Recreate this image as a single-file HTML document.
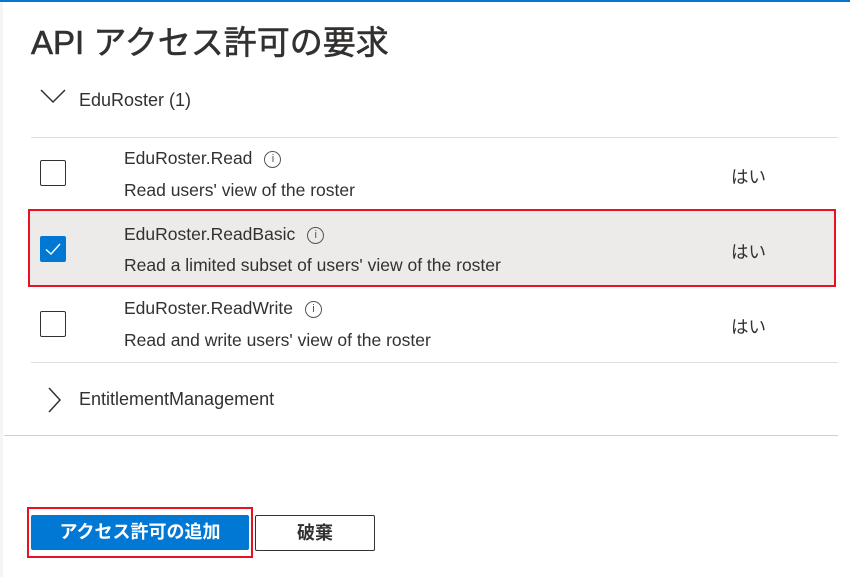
<!DOCTYPE html>
<html><head><meta charset="utf-8"><style>
body{margin:0;width:850px;height:577px;background:#fff;position:relative;overflow:hidden;font-family:"Liberation Sans","Noto Sans CJK JP",sans-serif;color:#323130}
.a{position:absolute;white-space:nowrap}
.cb{position:absolute;left:40px;width:24px;height:24px;border:1px solid #323130;border-radius:2px;background:#fff}
.t{font-size:17.5px;color:#323130}
.info{display:inline-block;width:15px;height:15px;border:1px solid #555;border-radius:50%;font-size:11px;text-align:center;line-height:15px;margin-left:12px;vertical-align:2px;color:#555}
.sep{position:absolute;height:1px;background:#e1dfdd}
</style></head><body>
<div class="a" style="left:0;top:0;width:850px;height:2px;background:#0078d4"></div>
<div class="a" style="left:0;top:2px;width:3px;height:575px;background:#f6f5f4"></div>
<div class="a" style="left:31px;top:16px;font-size:33px;font-weight:normal;color:#323130;-webkit-text-stroke:0.6px #323130">API アクセス許可の要求</div>
<svg class="a" style="left:40px;top:89px" width="26" height="16"><path d="M1 1 L13 13 L25 1" fill="none" stroke="#323130" stroke-width="1.5"/></svg>
<div class="a" style="left:79px;top:90px;font-size:18px">EduRoster (1)</div>
<div class="sep" style="left:31px;top:137px;width:807px"></div>

<div class="cb" style="top:160px"></div>
<div class="a t" style="left:124px;top:148px">EduRoster.Read<span class="info">i</span></div>
<div class="a t" style="left:124px;top:180px">Read users' view of the roster</div>
<div class="a t" style="left:731px;top:164px">はい</div>

<div class="a" style="left:28px;top:209px;width:804px;height:74px;background:#edebe9;border:2px solid #e81123"></div>
<div class="cb" style="top:236px;background:#0078d4;border-color:#0078d4"><svg width="24" height="24"><path d="M5 12.5 L10 17 L19 7" fill="none" stroke="#fff" stroke-width="1.4"/></svg></div>
<div class="a t" style="left:124px;top:224px">EduRoster.ReadBasic<span class="info">i</span></div>
<div class="a t" style="left:124px;top:255px">Read a limited subset of users' view of the roster</div>
<div class="a t" style="left:731px;top:239px">はい</div>

<div class="cb" style="top:311px"></div>
<div class="a t" style="left:124px;top:298px">EduRoster.ReadWrite<span class="info">i</span></div>
<div class="a t" style="left:124px;top:330px">Read and write users' view of the roster</div>
<div class="a t" style="left:731px;top:314px">はい</div>
<div class="sep" style="left:31px;top:362px;width:807px"></div>

<svg class="a" style="left:47px;top:387px" width="16" height="26"><path d="M2 1 L13 13 L2 25" fill="none" stroke="#323130" stroke-width="1.5"/></svg>
<div class="a t" style="left:79px;top:389px;font-size:18px">EntitlementManagement</div>
<div class="sep" style="left:4px;top:435px;width:834px;background:#d2d0ce"></div>

<div class="a" style="left:27px;top:507px;width:222px;height:47px;border:2px solid #e81123"></div>
<div class="a" style="left:31px;top:515px;width:218px;height:35px;background:#0078d4;border-radius:2px;color:#fff;font-size:18px;font-weight:bold;text-align:center;line-height:35px">アクセス許可の追加</div>
<div class="a" style="left:255px;top:515px;width:118px;height:34px;border:1px solid #323130;border-radius:2px;font-size:18px;font-weight:bold;text-align:center;line-height:34px">破棄</div>
</body></html>
